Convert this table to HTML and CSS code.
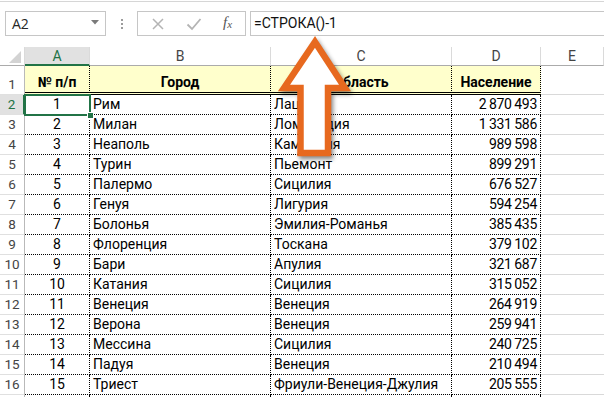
FILE: index.html
```html
<!DOCTYPE html>
<html lang="ru">
<head>
<meta charset="utf-8">
<title>Excel</title>
<link rel="stylesheet" href="styles.css">
</head>
<body>
<div class="app">
  <div class="topline"></div>
  <div class="fbar">
    <div class="namebox">
      <span class="nb-text">A2</span>
      <svg class="caret" width="8" height="5" viewBox="0 0 8 5"><polygon points="0,0 8,0 4,4.5" fill="#7a7a7a"/></svg>
    </div>
    <div class="dots"><i></i><i></i><i></i></div>
    <div class="btns">
      <svg class="ico" width="14" height="14" viewBox="0 0 14 14"><path d="M2 2 L12 12 M12 2 L2 12" stroke="#b4b4b4" stroke-width="1.5" fill="none"/></svg>
      <svg class="ico" width="16" height="14" viewBox="0 0 16 14"><path d="M1.5 7.5 L6 12 L14.5 2" stroke="#b4b4b4" stroke-width="1.8" fill="none"/></svg>
      <span class="fx">f<sub>x</sub></span>
    </div>
    <div class="formula">=СТРОКА()-1</div>
  </div>

  <div class="sheet">
    <div class="r hdr">
      <div class="c corner"><svg width="24" height="18" viewBox="0 0 24 18"><polygon points="21,4 21,16 9,16" fill="#d3d3d3"/></svg></div>
      <div class="c ch sel-col">A</div>
      <div class="c ch">B</div>
      <div class="c ch">C</div>
      <div class="c ch">D</div>
      <div class="c ch">E</div>
    </div>
    <div class="r r1">
      <div class="c rh">1</div>
      <div class="c t b ctr">№ п/п</div>
      <div class="c t b ctr">Город</div>
      <div class="c t b ctr">Область</div>
      <div class="c t b ctr">Население</div>
      <div class="c e"></div>
    </div>
    <div class="r"><div class="c rh sel-row">2</div><div class="c t ctr">1</div><div class="c t">Рим</div><div class="c t">Лацио</div><div class="c t num">2 870 493</div><div class="c e"></div></div>
    <div class="r"><div class="c rh">3</div><div class="c t ctr">2</div><div class="c t">Милан</div><div class="c t">Ломбардия</div><div class="c t num">1 331 586</div><div class="c e"></div></div>
    <div class="r"><div class="c rh">4</div><div class="c t ctr">3</div><div class="c t">Неаполь</div><div class="c t">Кампания</div><div class="c t num">989 598</div><div class="c e"></div></div>
    <div class="r"><div class="c rh">5</div><div class="c t ctr">4</div><div class="c t">Турин</div><div class="c t">Пьемонт</div><div class="c t num">899 291</div><div class="c e"></div></div>
    <div class="r"><div class="c rh">6</div><div class="c t ctr">5</div><div class="c t">Палермо</div><div class="c t">Сицилия</div><div class="c t num">676 527</div><div class="c e"></div></div>
    <div class="r"><div class="c rh">7</div><div class="c t ctr">6</div><div class="c t">Генуя</div><div class="c t">Лигурия</div><div class="c t num">594 254</div><div class="c e"></div></div>
    <div class="r"><div class="c rh">8</div><div class="c t ctr">7</div><div class="c t">Болонья</div><div class="c t">Эмилия-Романья</div><div class="c t num">385 435</div><div class="c e"></div></div>
    <div class="r"><div class="c rh">9</div><div class="c t ctr">8</div><div class="c t">Флоренция</div><div class="c t">Тоскана</div><div class="c t num">379 102</div><div class="c e"></div></div>
    <div class="r"><div class="c rh">10</div><div class="c t ctr">9</div><div class="c t">Бари</div><div class="c t">Апулия</div><div class="c t num">321 687</div><div class="c e"></div></div>
    <div class="r"><div class="c rh">11</div><div class="c t ctr">10</div><div class="c t">Катания</div><div class="c t">Сицилия</div><div class="c t num">315 052</div><div class="c e"></div></div>
    <div class="r"><div class="c rh">12</div><div class="c t ctr">11</div><div class="c t">Венеция</div><div class="c t">Венеция</div><div class="c t num">264 919</div><div class="c e"></div></div>
    <div class="r"><div class="c rh">13</div><div class="c t ctr">12</div><div class="c t">Верона</div><div class="c t">Венеция</div><div class="c t num">259 941</div><div class="c e"></div></div>
    <div class="r"><div class="c rh">14</div><div class="c t ctr">13</div><div class="c t">Мессина</div><div class="c t">Сицилия</div><div class="c t num">240 725</div><div class="c e"></div></div>
    <div class="r"><div class="c rh">15</div><div class="c t ctr">14</div><div class="c t">Падуя</div><div class="c t">Венеция</div><div class="c t num">210 494</div><div class="c e"></div></div>
    <div class="r"><div class="c rh">16</div><div class="c t ctr">15</div><div class="c t">Триест</div><div class="c t">Фриули-Венеция-Джулия</div><div class="c t num">205 555</div><div class="c e"></div></div>
    <div class="r"><div class="c rh"></div><div class="c t"></div><div class="c t"></div><div class="c t"></div><div class="c t"></div><div class="c e"></div></div>
  </div>

  <div class="selbox"><span class="handle"></span></div>

  <svg class="arrow" width="604" height="397" viewBox="0 0 604 397">
    <polygon points="315,42 345,88 328,88 328,153 300.5,153 300.5,88 284,88" fill="#ffffff" stroke="#e7691f" stroke-width="6.5" stroke-linejoin="miter" stroke-miterlimit="10"/>
  </svg>
</div>
</body>
</html>
```

FILE: styles.css
```css
html, body {
  margin: 0;
  padding: 0;
  background: #ffffff;
}
body {
  width: 604px;
  height: 397px;
  overflow: hidden;
  font-family: Roboto, "Liberation Sans", sans-serif;
  color: #000;
}
.app {
  position: relative;
  width: 604px;
  height: 397px;
  overflow: hidden;
}
.topline {
  height: 1px;
  margin-top: 1px;
  background: #d6d6d6;
}
.fbar {
  display: flex;
  align-items: stretch;
  height: 25px;
  margin-top: 9px;
  padding-left: 5px;
  margin-bottom: 11px;
}
.namebox {
  box-sizing: border-box;
  width: 101px;
  border: 1px solid #c6c6c6;
  display: flex;
  align-items: center;
  justify-content: space-between;
  padding: 0 6px 0 6px;
}
.nb-text {
  font-family: "Open Sans", "Noto Sans", sans-serif;
  font-size: 14px;
  color: #262626;
}
.caret {
  display: block;
  margin-top: -2px;
}
.dots {
  width: 31px;
  display: flex;
  flex-direction: column;
  align-items: center;
  justify-content: center;
  gap: 2px;
}
.dots i {
  display: block;
  width: 2px;
  height: 2px;
  background: #9c9c9c;
}
.btns {
  box-sizing: border-box;
  width: 109px;
  border: 1px solid #c6c6c6;
  display: flex;
  align-items: center;
  padding-left: 13px;
}
.btns .ico {
  display: block;
}
.btns .ico:first-child {
  margin-right: 21px;
}
.fx {
  font-family: "Liberation Serif", serif;
  font-style: italic;
  font-size: 15px;
  color: #555;
  margin-left: 21px;
  margin-top: -3px;
}
.fx sub {
  font-size: 11px;
  vertical-align: -1px;
}
.formula {
  box-sizing: border-box;
  flex: 1;
  margin-left: 4px;
  border: 1px solid #c6c6c6;
  border-right: none;
  padding-left: 3px;
  font-size: 14px;
  line-height: 23px;
  color: #111;
}

.sheet {
  font-size: 14px;
}
.r {
  display: grid;
  grid-template-columns: 25px 65px 181px 181px 89px 63px;
  height: 20px;
}
.c {
  box-sizing: border-box;
  height: 20px;
  line-height: 19px;
  white-space: nowrap;
  overflow: hidden;
}
.hdr, .hdr .c {
  height: 19px;
}
.hdr .c {
  border-bottom: 1px solid #ababab;
}
.corner {
  border-right: 1px solid #dadada;
}
.corner svg {
  display: block;
}
.ch {
  text-align: center;
  color: #444;
  line-height: 17px;
  padding-top: 1px;
  border-right: 1px solid #dadada;
}
.ch.sel-col {
  background: #e1e1e1;
  color: #217346;
  border-bottom: 2px solid #217346;
}
.rh {
  text-align: center;
  color: #444;
  font-size: 13.5px;
  border-right: 1px solid #b9b9b9;
  border-bottom: 1px solid #e0e0e0;
}
.rh.sel-row {
  background: #e1e1e1;
  color: #217346;
  border-right: 2px solid #217346;
}
.t {
  border-right: 1px dotted #000;
  border-bottom: 1px dotted #000;
  padding: 0 2px 0 3px;
}
.e {
  border-bottom: 1px solid #d9d9d9;
}
.ctr {
  text-align: center;
  padding: 0;
}
.num {
  text-align: right;
  padding: 0 3px 0 0;
  letter-spacing: -0.3px;
  word-spacing: -0.5px;
}
.r1, .r1 .c {
  height: 29px;
}
.r1 .c {
  padding-top: 7px;
}
.r1 .rh {
  padding-top: 9px;
}
.r1 .t {
  background: #ffffcc;
  border-bottom: 3px double #000;
}
.b {
  font-weight: bold;
}

.selbox {
  position: absolute;
  left: 24px;
  top: 94px;
  width: 67px;
  height: 22px;
  box-sizing: border-box;
  border: 2px solid #217346;
}
.handle {
  position: absolute;
  right: -5px;
  bottom: -5px;
  width: 5px;
  height: 5px;
  background: #217346;
  border: 1px solid #fff;
}
.arrow {
  position: absolute;
  left: 0;
  top: 0;
  filter: drop-shadow(2px 3px 2px rgba(0, 0, 0, 0.45));
}
```
